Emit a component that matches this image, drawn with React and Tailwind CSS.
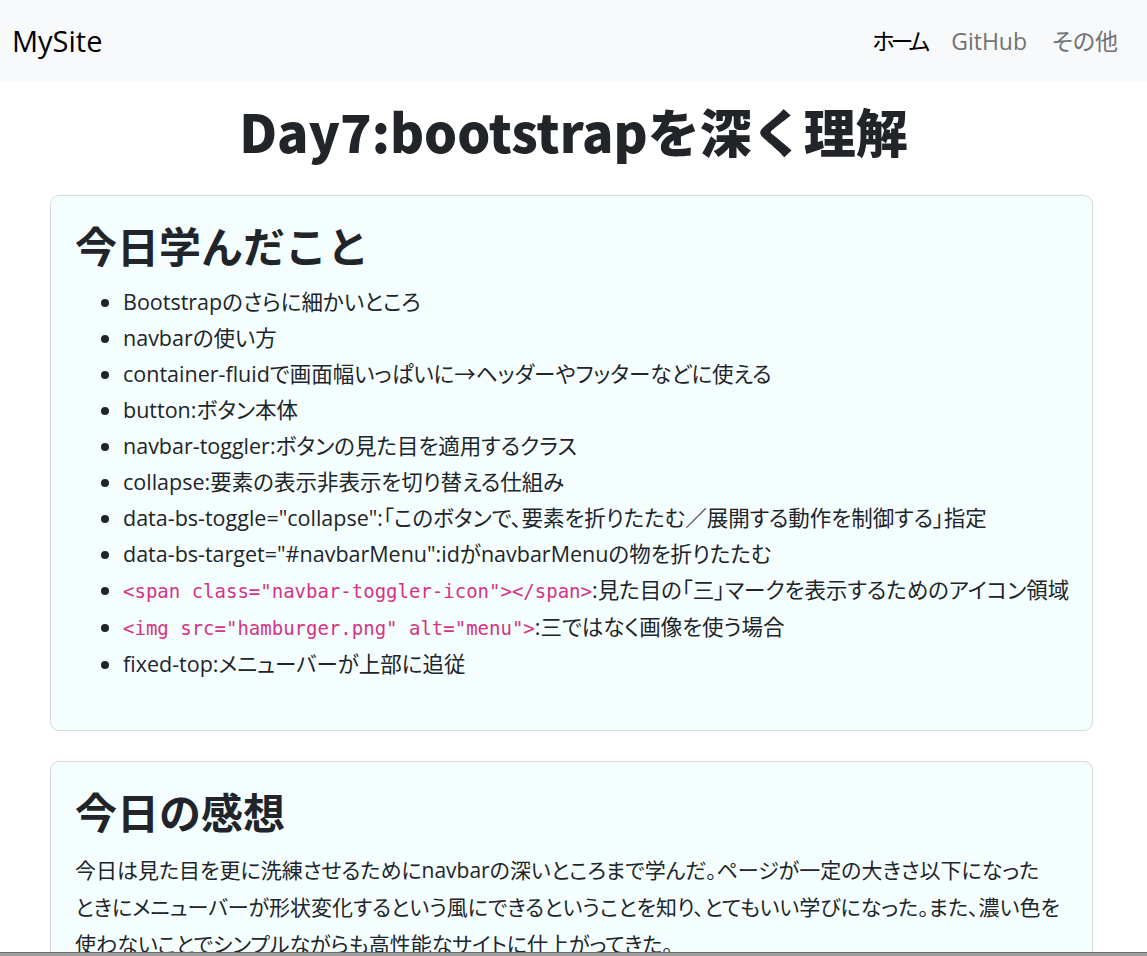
import React from 'react';

// Day7 notes page
const learned = [
  { text: 'Bootstrapのさらに細かいところ' },
  { text: 'navbarの使い方' },
  { text: 'container-fluidで画面幅いっぱいに→ヘッダーやフッターなどに使える' },
  { text: 'button:ボタン本体' },
  { text: 'navbar-toggler:ボタンの見た目を適用するクラス' },
  { text: 'collapse:要素の表示非表示を切り替える仕組み' },
  { text: 'data-bs-toggle="collapse":「このボタンで、要素を折りたたむ／展開する動作を制御する」指定' },
  { text: 'data-bs-target="#navbarMenu":idがnavbarMenuの物を折りたたむ' },
  { code: '<span class="navbar-toggler-icon"></span>', text: ':見た目の「三」マークを表示するためのアイコン領域' },
  { code: '<img src="hamburger.png" alt="menu">', text: ':三ではなく画像を使う場合' },
  { text: 'fixed-top:メニューバーが上部に追従' },
];

const impressions = [
  '今日は見た目を更に洗練させるためにnavbarの深いところまで学んだ。ページが一定の大きさ以下になった',
  'ときにメニューバーが形状変化するという風にできるということを知り、とてもいい学びになった。また、濃い色を',
  '使わないことでシンプルながらも高性能なサイトに仕上がってきた。',
];

const body = "font-['Open_Sans','Noto_Sans_CJK_JP',sans-serif] [font-feature-settings:'palt']";

function Card({ title, children }) {
  return (
    <div className="rounded-[9px] border border-[#d3d9dd] bg-[#f5fefe] px-6 pt-6 pb-6">
      <h2 className="mb-3 font-['Noto_Sans_CJK_JP',sans-serif] text-[42px] font-bold leading-[50px] text-[#212529] [font-feature-settings:normal]">{title}</h2>
      {children}
    </div>
  );
}

export default function App() {
  return (
    <div className={`flex h-[956px] flex-col overflow-hidden bg-white text-[#212529] ${body}`}>
      <div className="flex-1 overflow-hidden">
        <nav className="flex h-[82px] items-center justify-between bg-[#f8f9fa] pl-3 pr-[29px]">
          <span className="text-[29px] text-black">MySite</span>
          <div className="flex items-center gap-[25px] text-[23px]">
            <span className="tracking-[-4px] text-black">ホーム</span>
            <span className="text-[#6f7173]">GitHub</span>
            <span className="text-[#6f7173]">その他</span>
          </div>
        </nav>

        <h1 className="mt-[19px] text-center font-['Noto_Sans_CJK_JP',sans-serif] text-[52px] font-black leading-[60px] text-[#212529] [font-feature-settings:normal]">
          Day7:bootstrapを深く理解
        </h1>

        <div className="ml-[50px] mr-[54px] mt-[34px] flex flex-col gap-[30px]">
          <Card title="今日学んだこと">
            <ul className="mb-6 list-disc pt-[2px] pl-12 text-[21.5px] leading-[36px] marker:text-[#212529]">
              {learned.map((item, i) => (
                <li key={i} className="whitespace-nowrap">
                  {item.code && (
                    <code className="font-['DejaVu_Sans_Mono',monospace] text-[19px] text-[#d63384]">{item.code}</code>
                  )}
                  {item.text}
                </li>
              ))}
            </ul>
          </Card>

          <Card title="今日の感想">
            <p className="pt-[4px] text-[21px] leading-[37px]">
              {impressions.map((line, i) => (
                <span key={i} className="block whitespace-nowrap">{line}</span>
              ))}
            </p>
          </Card>
        </div>
      </div>
      <div className="h-[4px] shrink-0 border-t border-[#6b6b6b] bg-[#a09f9f]" />
    </div>
  );
}
